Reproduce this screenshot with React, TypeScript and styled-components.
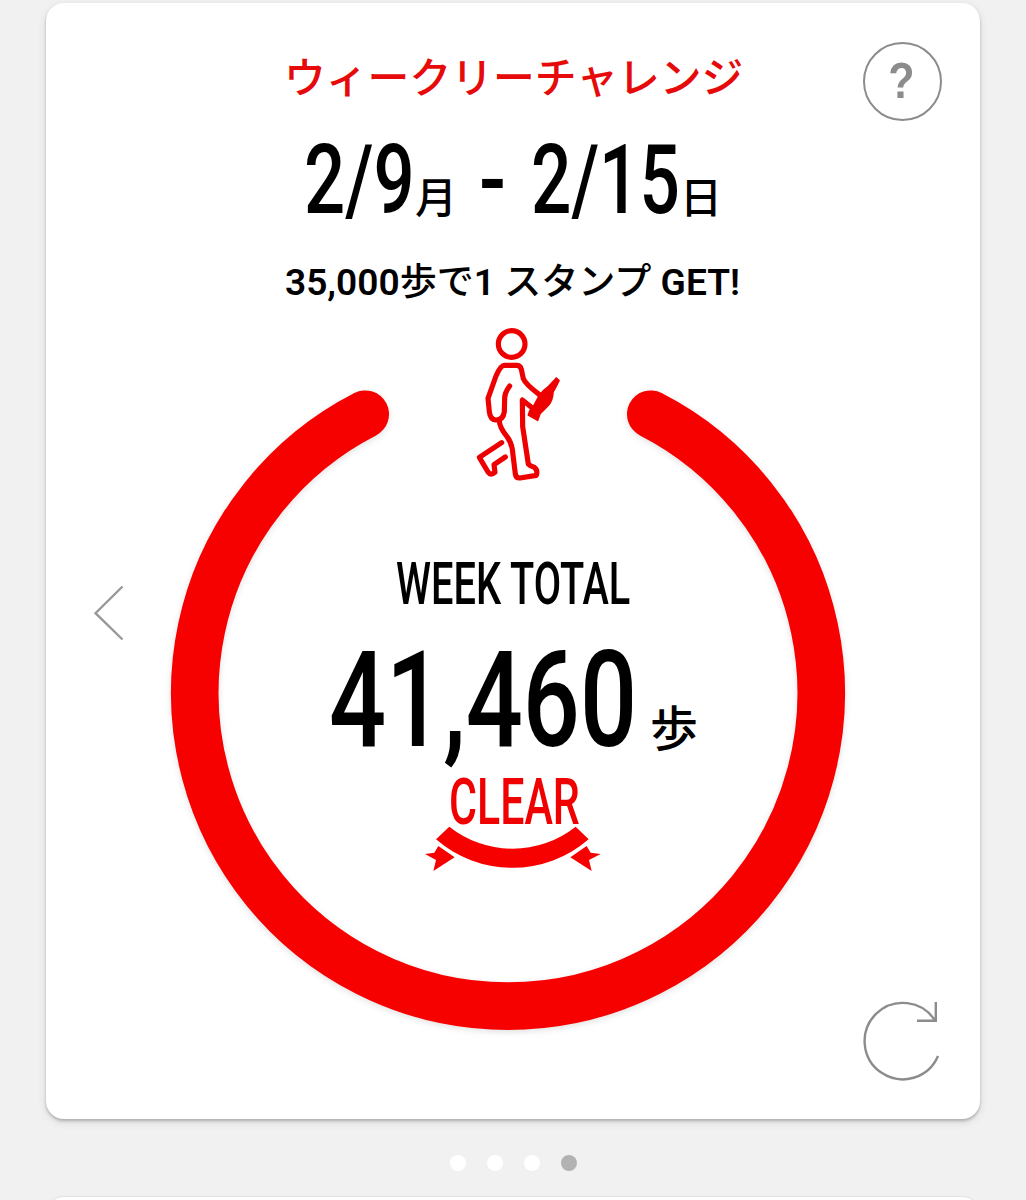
import React from "react";
import styled, { createGlobalStyle } from "styled-components";

const RED = "#f70000";
const GREY = "#8c8c8c";

const GlobalStyle = createGlobalStyle`
  * { box-sizing: border-box; }
  html, body { margin: 0; padding: 0; background: #f1f1f1; }
  body { font-family: Roboto, "Noto Sans CJK JP", sans-serif; color: #000; }
`;

const Page = styled.main`
  width: 1026px;
  height: 1200px;
  overflow: hidden;
  padding: 3px 46px 0;
  background: #f1f1f1;
  display: flex;
  flex-direction: column;
`;

const Card = styled.section`
  flex: none;
  height: 1116px;
  border-radius: 18px;
  background: #fff;
  box-shadow: 0 2px 3px rgba(0, 0, 0, 0.22), 0 3px 10px rgba(0, 0, 0, 0.1);
  display: grid;
  grid-template-columns: 125px 1fr 125px;
`;

const SideLeft = styled.div`
  padding: 580px 0 0 46px;
`;

const SideRight = styled.div`
  display: flex;
  flex-direction: column;
  justify-content: space-between;
  padding: 39px 0 37px 8px;
`;

const IconButton = styled.button<{ $w: number; $h: number }>`
  width: ${(p) => p.$w}px;
  height: ${(p) => p.$h}px;
  padding: 0;
  border: 0;
  background: none;
  display: block;
  svg { display: block; overflow: visible; }
`;

const HelpButton = styled.button`
  width: 79px;
  height: 79px;
  padding: 0;
  border: 2.5px solid ${GREY};
  border-radius: 50%;
  background: none;
  color: ${GREY};
  font: 700 50px/75px "Liberation Sans", sans-serif;
  span { display: block; transform: scaleX(0.86); margin-left: -2px; }
`;

const Center = styled.div`
  display: flex;
  flex-direction: column;
`;

const Title = styled.h1`
  margin: 47px 0 0;
  padding-left: 113px;
  height: 50px;
  font: 500 41.8px/50px "Noto Sans CJK JP", sans-serif;
  color: #e60a0a;
  white-space: nowrap;
`;

const DateRow = styled.div`
  margin-top: 30px;
  height: 100px;
  display: flex;
  padding-left: 133px;
`;

const Slot = styled.span<{ $w: number; $h: number }>`
  flex: none;
  display: block;
  width: ${(p) => p.$w}px;
  height: ${(p) => p.$h}px;
  line-height: ${(p) => p.$h}px;
`;

const Narrow = styled.span<{ $size: number; $scale: number; $weight?: number }>`
  display: inline-block;
  white-space: pre;
  font-family: Roboto, sans-serif;
  font-size: ${(p) => p.$size}px;
  font-weight: ${(p) => p.$weight ?? 500};
  line-height: inherit;
  transform: scaleX(${(p) => p.$scale});
  transform-origin: 0 50%;
`;

const Kanji = styled.span<{ $size: number; $top: number; $w: number }>`
  flex: none;
  width: ${(p) => p.$w}px;
  padding-top: ${(p) => p.$top}px;
  font: 500 ${(p) => p.$size}px/50px "Noto Sans CJK JP", sans-serif;
`;

const Goal = styled.p`
  margin: 29px 0 0;
  padding-left: 114px;
  height: 48px;
  font: 600 37.1px/48px Roboto, "Noto Sans CJK JP", sans-serif;
  white-space: pre;
`;

const Kana = styled.span`
  font-weight: 500;
`;

const Stage = styled.div`
  margin-top: 13px;
  width: 674px;
  height: 710px;
  display: grid;
  > * { grid-area: 1 / 1; }
`;

const Ring = styled.svg`
  align-self: end;
  display: block;
  overflow: visible;
  filter: drop-shadow(0 2px 3px rgba(0, 0, 0, 0.12));
`;

const Content = styled.div`
  display: flex;
  flex-direction: column;
  svg { display: block; }
`;

const Walker = styled.svg`
  margin-left: 289px;
`;

const Line = styled.div<{ $h: number; $left: number; $top: number }>`
  display: flex;
  height: ${(p) => p.$h}px;
  margin-top: ${(p) => p.$top}px;
  padding-left: ${(p) => p.$left}px;
`;

const Ribbon = styled.svg`
  margin: 0 0 0 244px;
`;

const Clear = styled(Line)`
  color: #f00000;
`;

const Dots = styled.nav`
  flex: none;
  margin-top: 36px;
  height: 16px;
  display: flex;
  justify-content: center;
  gap: 21px;
`;

const Dot = styled.span<{ $on?: boolean }>`
  width: 16px;
  height: 16px;
  border-radius: 50%;
  background: ${(p) => (p.$on ? "#b2b2b2" : "#fff")};
`;

const NextCard = styled.section`
  flex: none;
  height: 40px;
  margin-top: 26px;
  border-radius: 18px 18px 0 0;
  background: #fff;
  box-shadow: 0 0 2px rgba(0, 0, 0, 0.2);
`;

export default function App() {
  return (
    <Page>
      <GlobalStyle />
      <Card>
        <SideLeft>
          <IconButton $w={34} $h={60} aria-label="previous">
            <svg width="34" height="60" fill="none" stroke="#999" strokeWidth="2.4">
              <path d="M30.5 3.5 3.5 30.2 30.5 56.5" />
            </svg>
          </IconButton>
        </SideLeft>
        <Center>
          <Title>ウィークリーチャレンジ</Title>
          <DateRow>
            <Slot $w={111} $h={100}><Narrow $size={96} $scale={0.755}>2/9</Narrow></Slot>
            <Kanji $size={42} $top={40} $w={64}>月</Kanji>
            <Slot $w={52} $h={100}><Narrow $size={96} $scale={0.83}>-</Narrow></Slot>
            <Slot $w={149} $h={100}><Narrow $size={96} $scale={0.74}>2/15</Narrow></Slot>
            <Kanji $size={42} $top={40} $w={50}>日</Kanji>
          </DateRow>
          <Goal>35,000<Kana>歩で</Kana>1 <Kana>スタンプ</Kana> GET!</Goal>
          <Stage>
            <Ring width="674" height="674" viewBox="171 356 674 674" fill="none">
              <path d="M365.2 414.2A313.2 313.2 0 1 0 650.8 414.2" stroke={RED} strokeWidth="47.6" strokeLinecap="round" />
            </Ring>
            <Content>
              <Walker width="120" height="170" viewBox="0 0 360 510" fill="none" stroke="#ee0000" strokeWidth="15.5" strokeLinecap="round" strokeLinejoin="round">
                <circle cx="155" cy="72" r="40" />
                <path d="M149 198Q134 218 134 234L133 275Q130 300 108 300 90 298 88 275L84 235 108 168Q122 136 133 136H170Q181 136 184 148L190 176Q196 192 238 224" />
                <path d="M216 263 187 240 188 320 205 432Q211 439 223 442 234 450 229 466L180 474Q168 475 166 462L157 388Q153 365 141 350 117 320 118 300" />
                <path d="M125 368 58 412 84 456Q92 468 105 457L102 434 136 411" />
                <path d="M289 174 297 182 292 192 279 216Q278 240 266 255 254 268 240 281L233 301 205 285 210 271 218 264 239 225Q250 210 266 199Z" fill="#ee0000" strokeWidth="5" />
              </Walker>
              <Line $h={80} $left={225} $top={54}>
                <Slot $w={240} $h={80}><Narrow $size={59.5} $scale={0.668}>WEEK TOTAL</Narrow></Slot>
              </Line>
              <Line $h={120} $left={158} $top={17}>
                <Slot $w={321} $h={120}><Narrow $size={134} $scale={0.75}>41,460</Narrow></Slot>
                <Kanji $size={48} $top={59} $w={50}>歩</Kanji>
              </Line>
              <Clear $h={55} $left={278} $top={9}>
                <Slot $w={130} $h={66}><Narrow $size={64} $scale={0.67}>CLEAR</Narrow></Slot>
              </Clear>
              <Ribbon width="200" height="50" viewBox="0 165 600 150" fill={RED}>
                <path d="M103 170A305 305 0 0 0 482 170L521 208A350 350 0 0 1 63 208Z" />
                <path d="M70 228 119 262 55 303 63 270 30 252 58 248ZM515 228 466 262 530 303 522 270 557 252 527 248Z" />
              </Ribbon>
            </Content>
          </Stage>
        </Center>
        <SideRight>
          <HelpButton aria-label="help"><span>?</span></HelpButton>
          <IconButton $w={80} $h={82} aria-label="refresh">
            <svg width="80" height="82" viewBox="863 1000 80 82" fill="none" stroke={GREY} strokeWidth="2.4">
              <path d="M938 1056A38.2 38.2 0 1 1 935 1020.5" />
              <path d="M935.8 1002V1020.7H917" />
            </svg>
          </IconButton>
        </SideRight>
      </Card>
      <Dots>
        <Dot /><Dot /><Dot /><Dot $on />
      </Dots>
      <NextCard />
    </Page>
  );
}
